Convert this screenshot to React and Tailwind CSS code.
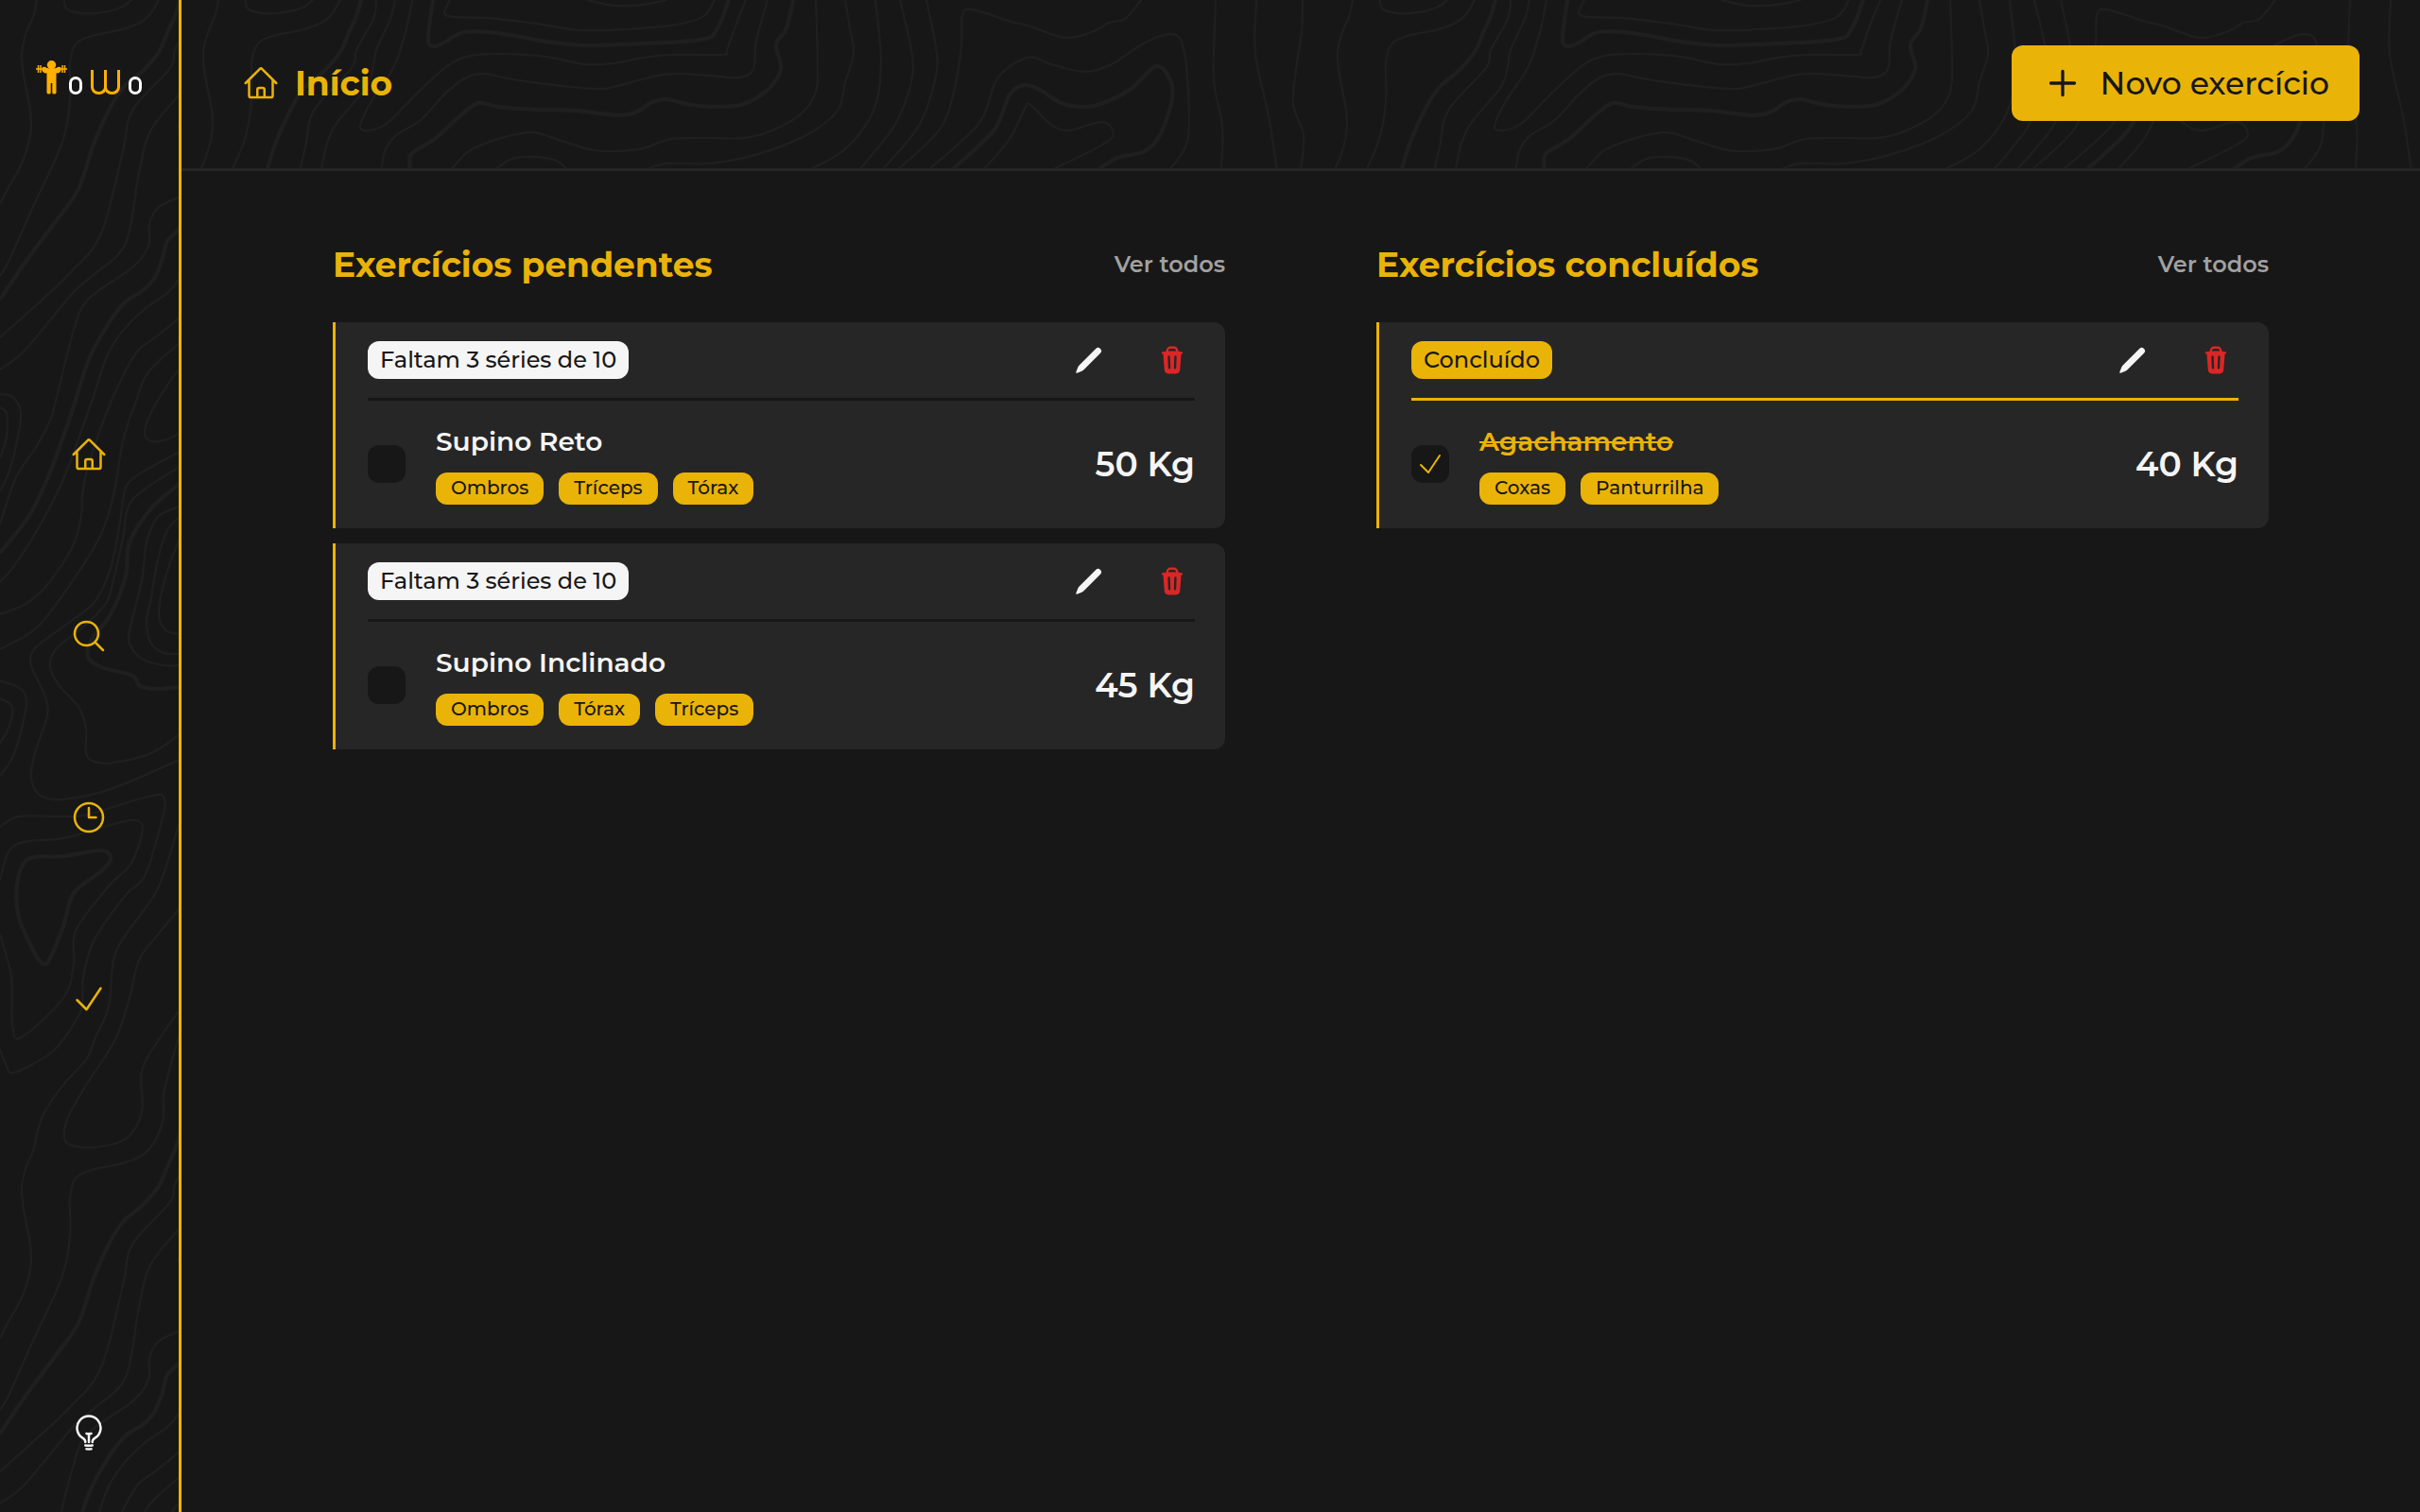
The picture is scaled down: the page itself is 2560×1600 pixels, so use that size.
import React, { useState } from "react";
import {
  HiOutlineHome,
  HiOutlineMagnifyingGlass,
  HiOutlineClock,
  HiOutlineCheck,
  HiOutlineLightBulb,
  HiOutlinePlus,
  HiMiniPencil,
  HiMiniTrash,
} from "react-icons/hi2";

/* Contour lines of the topographic texture, on a 1200 x 1200 tile. */
const THIN = [
  "189,873 167,940 133,989 120,1016 115,1065 100,1100 92,1120 67,1148 47,1177 39,1200 36,1215 27,1237 23,1257 25,1280 32,1317 32,1343 23,1373 8,1400 0,1416",
  "190,961 167,989 147,1016 137,1056 122,1100 90,1150 72,1182 68,1200 73,1211 100,1214 133,1205 150,1177 150,1133 168,1100 190,1069",
  "190,1094 174,1153 172,1187 157,1217 133,1230 97,1238 80,1247 74,1267 74,1307 65,1353 33,1423 10,1475 0,1492",
  "206,0 203,20 185,53 180,72 140,117 130,160 107,247 73,290 27,333 0,357",
  "226,0 221,20 206,53 203,70 195,93 160,137 147,183 133,257 100,290 77,310 27,370 0,391",
  "244,0 238,30 225,70 201,107 189,133 198,138 218,130 248,100 281,70 306,59 340,57 386,60 426,68 457,67 488,61 518,58 572,58 577,53 585,30 597,0",
  "284,0 278,14 289,18 324,19 375,25 421,32 467,31 518,27 551,18 564,0",
  "429,0 457,6 488,5 513,0",
  "620,0 608,43 605,73 590,82 559,80 528,78 503,80 457,92 437,94 386,89 345,83 319,78 299,83 278,100 253,127 227,143 215,160 211,180 200,204 188,209 167,220 158,237 157,260 140,283 93,317 77,353 60,420 53,445 37,475 17,505 0,554",
  "285,180 304,160 335,147 370,140 396,147 431,158 457,160 488,157 518,147 559,146 595,146 625,138 656,120 671,97 673,67 671,0",
  "190,295 177,310 153,327 130,350 113,377 97,425 67,507 40,560 17,596 0,616",
  "190,336 167,355 147,370 133,392 113,436 93,494 87,525 86,545 77,578 50,619 27,639 0,650",
  "190,363 167,383 153,400 143,427 130,467 120,525 107,565 80,610 40,663 0,687",
  "190,391 182,400 160,436 153,458 160,467 177,465 190,458",
  "190,478 150,500 133,516 127,552 117,601 100,637 67,663 37,686 33,704 47,735 50,757 37,797 33,824 43,842 67,846 117,835 190,804",
  "190,494 140,529 130,570 120,614 113,637 93,659 60,686 53,706 63,726 83,748 91,771 91,797 100,806 120,807 160,797 190,777",
  "190,536 167,547 155,574 150,614 137,668 138,683 150,697 173,704 190,704",
  "190,547 177,561 167,592 160,632 155,659 160,681 173,691 190,692",
  "190,570 178,601 169,637 169,657 177,668 190,671",
  "0,417 13,420 22,436 18,467 10,498 0,520",
  "0,431 7,438 7,462 0,485",
  "0,721 17,726 28,739 23,771 13,802 0,821",
  "0,739 12,746 13,757 7,775 0,786",
  "0,931 10,900 30,890 67,887 133,869 150,872 148,891 137,916 113,940 80,985 78,1020 67,1056 22,1098 13,1083 12,1034 0,989",
  "0,875 20,864 67,864 93,862 160,842 174,846 170,873 153,927 133,947 100,994 88,1034 87,1065 78,1083 67,1100 50,1117 15,1135 7,1128 0,1110",
  "331,180 350,168 375,166 396,170 409,180",
  "490,180 513,173 559,173 610,163 661,143 694,117 702,87 711,57 707,30 702,0",
  "664,180 703,157 732,117 740,67 734,0",
  "717,180 754,133 772,87 772,53 760,0",
  "741,180 780,133 798,80 798,50 788,0",
  "757,180 802,137 818,93 825,47 826,17 836,10 878,23 895,27 935,40 965,33 981,24 998,20 1015,0",
  "790,180 844,130 863,83 895,61 920,68 955,76 984,68 1016,47 1045,36 1059,47 1065,97 1064,150 1045,180",
  "848,180 876,147 892,115 898,111 920,132 939,138 974,129 986,142 971,155 920,180",
  "1094,0 1092,83 1101,133 1100,180",
  "1137,0 1136,57 1150,123 1159,180",
  "1186,0 1185,33 1180,67 1176,110 1187,143 1184,180",
];

const THICK = [
  "190,0 185,17 176,37 168,55 151,75 131,92 117,113 100,150 83,200 60,233 27,277 0,317",
  "266,0 261,40 266,49 278,45 299,34 335,35 386,44 426,48 467,47 549,42 567,30 579,0",
  "647,0 640,30 629,47 634,73 620,95 595,110 569,113 539,111 513,105 498,108 482,118 462,122 416,117 375,116 335,113 314,109 294,123 268,147 243,163 240,180 215,215 190,242 177,255 172,273 163,295 150,308 130,322 110,350 93,383 73,445 50,507 30,547 0,585",
  "190,512 160,538 137,574 133,610 117,650 97,677 93,695 107,706 140,715 148,726 167,729 190,727",
  "43,906 67,906 107,900 117,909 107,922 78,945 67,980 53,1014 46,1020 37,1009 20,971 18,936 27,911 43,906",
  "815,180 860,137 876,100 892,90 908,95 933,110 965,112 1003,95 1031,70 1047,87 1047,110 1035,143 1019,160 990,167 969,180",
];

/* Catmull-Rom spline through a list of "x,y" points. */
function spline(line) {
  const p = line.split(" ").map((s) => s.split(",").map(Number));
  let d = `M${p[0][0]} ${p[0][1]}`;
  for (let i = 0; i < p.length - 1; i++) {
    const a = p[i - 1] || p[i];
    const b = p[i];
    const c = p[i + 1];
    const e = p[i + 2] || c;
    d += `C${b[0] + (c[0] - a[0]) / 6} ${b[1] + (c[1] - a[1]) / 6} ${c[0] - (e[0] - b[0]) / 6} ${c[1] - (e[1] - b[1]) / 6} ${c[0]} ${c[1]}`;
  }
  return d;
}

const THIN_D = THIN.map(spline).join("");
const THICK_D = THICK.map(spline).join("");

function Topography({ id }) {
  return (
    <svg aria-hidden="true" className="pointer-events-none absolute inset-0 h-full w-full">
      <defs>
        <pattern id={id} width="1200" height="1200" patternUnits="userSpaceOnUse">
          {[0, -1200].map((y) => (
            <g key={y} transform={`translate(0 ${y})`} fill="none" stroke="#1f1f1f">
              <path d={THIN_D} strokeWidth="2" />
              <path d={THICK_D} strokeWidth="4" />
            </g>
          ))}
        </pattern>
      </defs>
      <rect width="100%" height="100%" fill={`url(#${id})`} />
    </svg>
  );
}

function LogoRing() {
  return <span className="h-[19px] w-[14px] rounded-[7px] border-[3px] border-white" />;
}

function Logo() {
  return (
    <a href="#" aria-label="ToWo" className="relative flex h-9 items-end">
      <svg viewBox="0 0 33 36" className="h-9 w-[33px]" fill="#ffb000" aria-hidden="true">
        <circle cx="16.500" cy="4.700" r="4.700" />
        <path d="M6.500 7.500q2.500-1.500 5 .5l2 1h6l2-1q2.500-2 5-.5v3.500q-2 3-5 2.500V34q0 1.500-2.200 1.500-2 0-2-1.500V24h-1.600v10q0 1.500-2 1.500-2.200 0-2.200-1.500V13.500q-3 .5-5-2.500z" />
        <path d="M0 9h33M2.500 5v8M5 5v8M28 5v8M30.500 5v8" stroke="#ffb000" strokeWidth="1.500" fill="none" />
      </svg>
      <span className="ml-[2px] flex items-end">
        <LogoRing />
        <span className="ml-[9px] flex">
          <span className="h-[26px] w-[17px] rounded-b-[8px] border-x-[3px] border-b-[3px] border-[#ffb000]" />
          <span className="-ml-[3px] h-[26px] w-[17px] rounded-b-[8px] border-x-[3px] border-b-[3px] border-[#ffb000]" />
        </span>
        <span className="ml-[9px] flex">
          <LogoRing />
        </span>
      </span>
    </a>
  );
}

const NAV = [
  { label: "Início", Icon: HiOutlineHome },
  { label: "Buscar", Icon: HiOutlineMagnifyingGlass },
  { label: "Pendentes", Icon: HiOutlineClock },
  { label: "Concluídos", Icon: HiOutlineCheck },
];

function Sidebar() {
  return (
    <aside className="relative flex w-48 shrink-0 flex-col items-center border-r-[3px] border-[#eab308] pt-16 pr-[2px] pb-16">
      <Topography id="topo-side" />
      <Logo />
      <nav className="relative mt-[361px] flex flex-col gap-[152px]">
        {NAV.map(({ label, Icon }) => (
          <a key={label} href="#" aria-label={label} className="text-[#eab308]">
            <Icon className="size-10" />
          </a>
        ))}
      </nav>
      <button type="button" aria-label="Alternar tema" className="relative mt-auto text-neutral-100">
        <HiOutlineLightBulb className="size-10" />
      </button>
    </aside>
  );
}

function Header() {
  return (
    <header className="relative flex h-[181px] items-start justify-between border-b-[3px] border-neutral-800 px-16 pt-12">
      <Topography id="topo-head" />
      <div className="relative flex h-20 items-center gap-4 text-[#eab308]">
        <HiOutlineHome className="size-10" />
        <h1 className="text-4xl leading-10 font-bold">Início</h1>
      </div>
      <button
        type="button"
        className="relative flex h-20 items-center gap-5 rounded-xl bg-[#eab308] pr-8 pl-[34px] text-[33px] leading-10 font-medium text-neutral-900"
      >
        <HiOutlinePlus className="size-10 [stroke-width:2]" />
        Novo exercício
      </button>
    </header>
  );
}

function Card({ name, tags, weight, status, done }) {
  const [checked, setChecked] = useState(done);
  return (
    <li className="rounded-r-xl border-l-[3px] border-[#eab308] bg-neutral-800 pr-8 pl-[34px]">
      <div
        className={
          "flex items-center justify-between border-b-[3px] py-5 " +
          (done ? "border-[#eab308]" : "border-neutral-900")
        }
      >
        <span
          className={
            "flex h-10 items-center rounded-xl px-[13px] text-2xl leading-8 font-medium text-neutral-900 " +
            (done ? "bg-[#eab308]" : "bg-neutral-100")
          }
        >
          {status}
        </span>
        <div className="flex h-10 items-center gap-14 pr-2">
          <button type="button" aria-label={`Editar ${name}`} className="text-neutral-100">
            <HiMiniPencil className="size-8" />
          </button>
          <button type="button" aria-label={`Excluir ${name}`} className="text-[#dc2626]">
            <HiMiniTrash className="size-8" />
          </button>
        </div>
      </div>
      <div className="flex items-center pt-[23px] pb-[25px]">
        <label className="relative flex size-10 shrink-0 items-center justify-center rounded-xl bg-neutral-900">
          <input
            type="checkbox"
            aria-label={name}
            checked={checked}
            onChange={(e) => setChecked(e.target.checked)}
            className="absolute inset-0 size-10 appearance-none rounded-xl"
          />
          {checked && <HiOutlineCheck className="pointer-events-none relative size-8 text-[#eab308]" />}
        </label>
        <div className="ml-8 flex flex-1 flex-col gap-[13px]">
          <h3
            className={
              "text-[28px] leading-10 font-semibold " + (done ? "text-[#eab308] line-through" : "text-neutral-100")
            }
          >
            {name}
          </h3>
          <ul className="flex gap-4">
            {tags.map((t) => (
              <li
                key={t}
                className="h-[34px] rounded-xl bg-[#eab308] px-4 text-xl leading-8 font-medium text-neutral-900"
              >
                {t}
              </li>
            ))}
          </ul>
        </div>
        <span className="text-4xl leading-10 font-semibold text-neutral-100">{weight}</span>
      </div>
    </li>
  );
}

function Column({ title, items }) {
  return (
    <section>
      <div className="flex items-center justify-between">
        <h2 className="text-4xl leading-10 font-bold text-[#eab308]">{title}</h2>
        <a href="#" className="text-2xl leading-8 font-semibold text-neutral-400">
          Ver todos
        </a>
      </div>
      <ul className="mt-[41px] flex flex-col gap-4">
        {items.map((it) => (
          <Card key={it.name} {...it} />
        ))}
      </ul>
    </section>
  );
}

const PENDING = [
  { name: "Supino Reto", tags: ["Ombros", "Tríceps", "Tórax"], weight: "50 Kg", status: "Faltam 3 séries de 10", done: false },
  { name: "Supino Inclinado", tags: ["Ombros", "Tórax", "Tríceps"], weight: "45 Kg", status: "Faltam 3 séries de 10", done: false },
];

const DONE = [
  { name: "Agachamento", tags: ["Coxas", "Panturrilha"], weight: "40 Kg", status: "Concluído", done: true },
];

export default function App() {
  return (
    <div className="flex min-h-screen bg-neutral-900 font-['Montserrat','Inter',sans-serif]">
      <Sidebar />
      <div className="flex min-w-0 flex-1 flex-col">
        <Header />
        <main className="grid grid-cols-2 gap-40 px-40 pt-[79px]">
          <Column title="Exercícios pendentes" items={PENDING} />
          <Column title="Exercícios concluídos" items={DONE} />
        </main>
      </div>
    </div>
  );
}
